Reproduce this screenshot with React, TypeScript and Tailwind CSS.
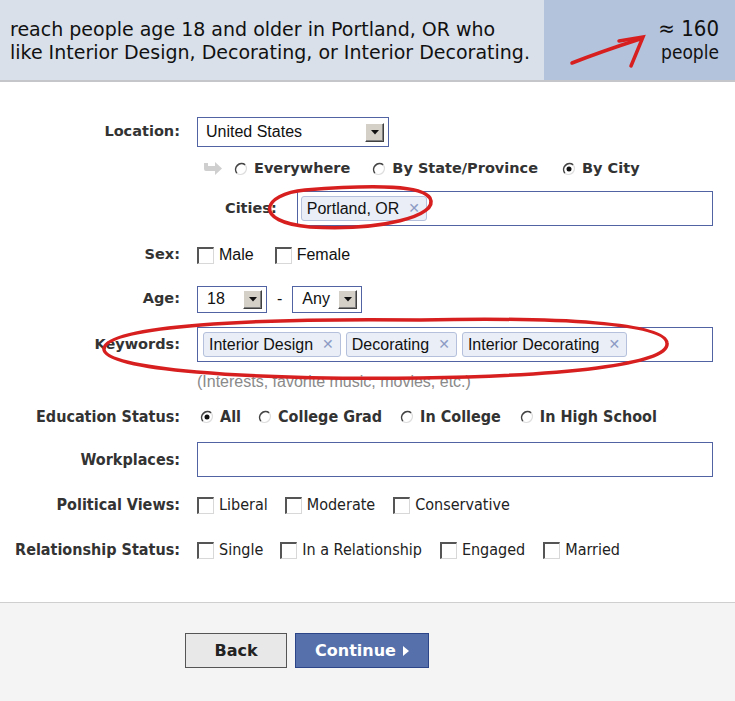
import React from 'react';

const label = "font-['DejaVu_Sans',sans-serif] font-bold text-[14.5px] text-[#333]";
const lowLabel = "font-['DejaVu_Sans_Condensed','DejaVu_Sans',sans-serif] font-bold text-[16px] text-[#333]";
const lowOpt = "font-['DejaVu_Sans_Condensed','DejaVu_Sans',sans-serif] text-[16px] text-[#222]";
const ctrl = "font-['Liberation_Sans',Arial,sans-serif] text-[16px] text-[#111]";

function Radio({ checked = false }: { checked?: boolean }) {
  return (
    <svg width="14" height="14" viewBox="0 0 14 14" className="shrink-0">
      <circle cx="7" cy="7" r="6" fill="#fff" />
      <path d="M2.8 11.2 A6 6 0 0 1 11.2 2.8" fill="none" stroke="#444" strokeWidth="1.6" />
      <path d="M11.2 2.8 A6 6 0 0 1 2.8 11.2" fill="none" stroke="#ddd" strokeWidth="1.4" />
      {checked && <circle cx="7" cy="7" r="2.5" fill="#111" />}
    </svg>
  );
}

function Check() {
  return (
    <span className="block h-[17px] w-[17px] shrink-0 border-t-2 border-l-2 border-t-[#555] border-l-[#555] border-r border-b border-r-[#d8d8d8] border-b-[#d8d8d8] bg-white" />
  );
}

function DropBtn() {
  return (
    <span className="flex h-[19px] w-[19px] items-center justify-center border border-t-white border-l-white border-r-[#404040] border-b-[#404040] bg-[#d4d0c8] shadow-[inset_-1px_-1px_0_#808080]">
      <svg width="8" height="5" viewBox="0 0 8 5">
        <path d="M0 0 H8 L4 4.5 Z" fill="#111" />
      </svg>
    </span>
  );
}

function Token({ text }: { text: string }) {
  return (
    <span className={`${ctrl} flex h-[25px] items-center gap-[9px] rounded-[3px] border border-[#b5c1dc] bg-[#e9eef7] pl-[5px] pr-[6px]`}>
      {text}
      <span className="font-['DejaVu_Sans',sans-serif] text-[14px] font-bold text-[#8d9bc4]">✕</span>
    </span>
  );
}

function Opt({ children, first = false, gap }: { children: React.ReactNode; first?: boolean; gap: string }) {
  return <span className={`flex items-center ${first ? '' : gap}`}>{children}</span>;
}

function Row({ name, children, className = '', low = false }: { name?: string; children: React.ReactNode; className?: string; low?: boolean }) {
  return (
    <div className={`flex items-center ${className}`}>
      <div className={`w-[180px] shrink-0 text-right ${low ? lowLabel : label}`}>{name}</div>
      <div className="ml-[17px] flex flex-1 items-center">{children}</div>
    </div>
  );
}

export default function App() {
  return (
    <div className="relative h-[701px] w-[735px] overflow-hidden bg-white">
      {/* summary header */}
      <div className="flex h-[82px] border-b-2 border-[#c4c6c9]">
        <div className="flex flex-1 flex-col justify-center bg-[#d9e0ea] pl-[10px] pt-[2px] font-['DejaVu_Sans',sans-serif] text-[19px] leading-[23px] text-[#111]">
          <div>reach people age 18 and older in Portland, OR who</div>
          <div>like Interior Design, Decorating, or Interior Decorating.</div>
        </div>
        <div className="flex w-[191px] flex-col items-end justify-center bg-[#b3c3dc] pr-[16px] font-['DejaVu_Sans_Condensed','DejaVu_Sans',sans-serif] text-[#111]">
          <div className="text-[22px] leading-[24px]">≈ 160</div>
          <div className="text-[19px] leading-[23px]">people</div>
        </div>
      </div>

      {/* targeting form */}
      <div className="border-b border-[#cfcfcf] pt-[35px] pb-[37px]">
        <Row name="Location:" className="h-[30px]">
          <div className="flex h-[30px] w-[192px] items-center justify-between border border-[#5263a3] pl-[8px] pr-[4px]">
            <span className={ctrl}>United States</span>
            <DropBtn />
          </div>
        </Row>

        <Row className="mt-[7px] h-[30px]">
          <svg width="20" height="16" viewBox="0 0 20 16" className="ml-[6px]">
            <path d="M1 2 V8 Q1 10 3 10 H12 V14 L19 7.5 L12 1 V5 H5 V2 Z" fill="#cfcfcf" />
          </svg>
          <div className="ml-[11px] flex items-center font-['DejaVu_Sans',sans-serif] text-[14.5px] font-bold text-[#333]">
            <Opt first gap=""><Radio /><span className="ml-[6px]">Everywhere</span></Opt>
            <Opt gap="ml-[22px]"><Radio /><span className="ml-[6px]">By State/Province</span></Opt>
            <Opt gap="ml-[24px]"><Radio checked /><span className="ml-[6px]">By City</span></Opt>
          </div>
        </Row>

        <Row className="mt-[7px] h-[35px]">
          <span className={`${label} ml-[28px]`}>Cities:</span>
          <div className="ml-[20px] mr-[22px] flex h-[35px] flex-1 items-center border border-[#5263a3] pl-[3px]">
            <Token text="Portland, OR" />
          </div>
        </Row>

        <Row name="Sex:" className="mt-[14px] h-[30px]">
          <div className={`${ctrl} flex items-center`}>
            <Opt first gap=""><Check /><span className="ml-[5px]">Male</span></Opt>
            <Opt gap="ml-[21px]"><Check /><span className="ml-[5px]">Female</span></Opt>
          </div>
        </Row>

        <Row name="Age:" className="mt-[15px] h-[28px]">
          <div className="flex h-[27px] w-[70px] items-center justify-between border border-[#5263a3] pl-[9px] pr-[4px]">
            <span className={ctrl}>18</span>
            <DropBtn />
          </div>
          <span className={`${ctrl} mx-[10px]`}>-</span>
          <div className="flex h-[27px] w-[70px] items-center justify-between border border-[#5263a3] pl-[9px] pr-[4px]">
            <span className={ctrl}>Any</span>
            <DropBtn />
          </div>
        </Row>

        <Row name="Keywords:" className="mt-[14px] h-[35px]">
          <div className="mr-[22px] flex h-[35px] flex-1 items-center gap-[5px] border border-[#5263a3] pl-[5px]">
            <Token text="Interior Design" />
            <Token text="Decorating" />
            <Token text="Interior Decorating" />
          </div>
        </Row>

        <Row className="mt-[10px] h-[20px]">
          <span className="font-['Liberation_Sans',Arial,sans-serif] text-[16px] text-[#8a8a8a]">(Interests, favorite music, movies, etc.)</span>
        </Row>

        <Row name="Education Status:" low className="mt-[10px] h-[30px]">
          <div className={`${lowLabel} ml-[3px] flex items-center text-[#222]`}>
            <Opt first gap=""><Radio checked /><span className="ml-[6px]">All</span></Opt>
            <Opt gap="ml-[17px]"><Radio /><span className="ml-[6px]">College Grad</span></Opt>
            <Opt gap="ml-[18px]"><Radio /><span className="ml-[6px]">In College</span></Opt>
            <Opt gap="ml-[19px]"><Radio /><span className="ml-[6px]">In High School</span></Opt>
          </div>
        </Row>

        <Row name="Workplaces:" low className="mt-[10px] h-[35px]">
          <div className="mr-[22px] h-[35px] flex-1 border border-[#5263a3]" />
        </Row>

        <Row name="Political Views:" low className="mt-[13px] h-[30px]">
          <div className={`${lowOpt} flex items-center`}>
            <Opt first gap=""><Check /><span className="ml-[5px]">Liberal</span></Opt>
            <Opt gap="ml-[17px]"><Check /><span className="ml-[5px]">Moderate</span></Opt>
            <Opt gap="ml-[18px]"><Check /><span className="ml-[5px]">Conservative</span></Opt>
          </div>
        </Row>

        <Row name="Relationship Status:" low className="mt-[15px] h-[30px]">
          <div className={`${lowOpt} flex items-center`}>
            <Opt first gap=""><Check /><span className="ml-[5px]">Single</span></Opt>
            <Opt gap="ml-[17px]"><Check /><span className="ml-[5px]">In a Relationship</span></Opt>
            <Opt gap="ml-[18px]"><Check /><span className="ml-[5px]">Engaged</span></Opt>
            <Opt gap="ml-[18px]"><Check /><span className="ml-[5px]">Married</span></Opt>
          </div>
        </Row>
      </div>

      {/* buttons */}
      <div className="flex h-[98px] gap-[8px] bg-[#f4f4f4] pl-[185px] pt-[30px]">
        <button className="h-[35px] w-[102px] border border-[#555] bg-[#e8e8e8] font-['DejaVu_Sans',sans-serif] text-[16px] font-bold text-[#222]">
          Back
        </button>
        <button className="flex h-[35px] w-[134px] items-center justify-center gap-[7px] border border-[#2b4588] bg-[#5670ab] font-['DejaVu_Sans',sans-serif] text-[16px] font-bold text-white">
          Continue
          <svg width="6" height="10" viewBox="0 0 6 10">
            <path d="M0 0 L6 5 L0 10 Z" fill="#fff" />
          </svg>
        </button>
      </div>

      {/* red hand-drawn annotations */}
      <svg className="pointer-events-none absolute inset-0" width="735" height="701" viewBox="0 0 735 701">
        <g fill="none" stroke="#d71f1f" strokeWidth="3.5" strokeLinecap="round">
          <path d="M572 63 Q600 52 640 39" />
          <path d="M619 41 L643 37 L631 66" />
          <path d="M305 190 C262 194 252 222 310 227 C380 231 440 216 430 198 C422 186 380 184 305 190" />
          <path d="M420 320 C250 318 110 326 104 348 C100 370 250 380 420 378 C560 376 670 365 667 343 C665 323 560 317 420 320" />
        </g>
      </svg>
    </div>
  );
}
